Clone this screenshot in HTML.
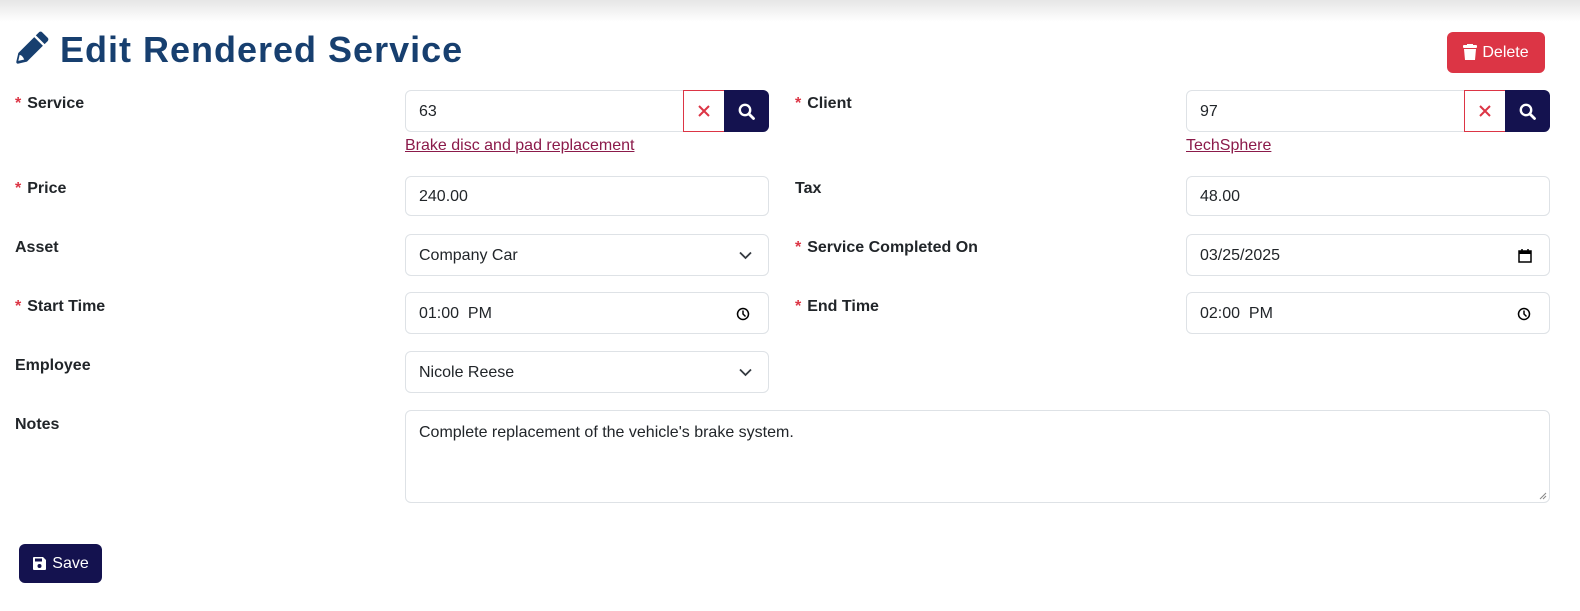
<!DOCTYPE html>
<html><head><style>
body{margin:0;width:1580px;height:611px;background:#fff;font-family:"Liberation Sans",sans-serif;position:relative;overflow:hidden;color:#212529}
.top{position:absolute;left:0;top:0;width:1580px;height:22px;background:linear-gradient(#e6e6e6,#fff)}
.a{position:absolute}
h1{position:absolute;left:60px;top:29px;margin:0;font-size:36px;font-weight:bold;color:#173f6f;letter-spacing:1px}
.lbl{position:absolute;font-weight:bold;font-size:16px;color:#212529}
.lbl i{color:#dc3545;font-style:normal;margin-right:6px}
.in{position:absolute;box-sizing:border-box;border:1px solid #dee2e6;border-radius:6px;background:#fff;font-size:16px;padding-left:13px;padding-top:2px;display:flex;align-items:center;color:#212529}
.lnk{position:absolute;color:#8b1a4a;text-decoration:underline;font-size:16px}
.x{position:absolute;box-sizing:border-box;border:1px solid #dc3545;width:42px;height:42px;display:flex;align-items:center;justify-content:center;background:#fff}
.s{position:absolute;width:45px;height:42px;background:#14124f;border-radius:0 6px 6px 0;display:flex;align-items:center;justify-content:center}
.btn{position:absolute;color:#fff;font-size:16px;border-radius:6px;display:flex;align-items:center;justify-content:center}
</style></head><body>
<div class="top"></div>
<svg class="a" style="left:15px;top:31px" width="34" height="34" viewBox="0 0 512 512"><path fill="#173f6f" d="M410 20l82 82c14 14 14 36 0 50l-46 46-132-132 46-46c14-14 36-14 50 0zM290 92l130 130-240 240-130 30c-20 4-34-10-30-30l30-130zM70 360l-20 90 90-20c-10-10-20-60-70-70z"/></svg>
<h1>Edit Rendered Service</h1>
<div class="btn" style="left:1447px;top:32px;width:98px;height:41px;background:#dc3545"><svg width="14" height="17" viewBox="0 0 14 17" style="margin-right:5px"><rect x="0" y="1" width="14" height="3" rx="1" fill="#fff"/><rect x="4" y="0" width="6" height="2" fill="#fff"/><path d="M1 5h12l-1 11H2z" fill="#fff"/></svg>Delete</div>

<div class="lbl" style="left:15px;top:95px"><i>*</i>Service</div>
<div class="in" style="left:405px;top:90px;width:290px;height:42px;border-radius:6px 0 0 6px">63</div>
<div class="x" style="left:683px;top:90px"><svg width="12" height="12"><path d="M1 1L11 11M11 1L1 11" stroke="#dc3545" stroke-width="2"/></svg></div>
<div class="s" style="left:724px;top:90px"><svg width="17" height="17" viewBox="0 0 17 17"><circle cx="7" cy="7" r="5.2" fill="none" stroke="#fff" stroke-width="2.4"/><path d="M11 11l4.5 4.5" stroke="#fff" stroke-width="2.8" stroke-linecap="round"/></svg></div>
<div class="lnk" style="left:405px;top:137px">Brake disc and pad replacement</div>

<div class="lbl" style="left:795px;top:95px"><i>*</i>Client</div>
<div class="in" style="left:1186px;top:90px;width:290px;height:42px;border-radius:6px 0 0 6px">97</div>
<div class="x" style="left:1464px;top:90px"><svg width="12" height="12"><path d="M1 1L11 11M11 1L1 11" stroke="#dc3545" stroke-width="2"/></svg></div>
<div class="s" style="left:1505px;top:90px"><svg width="17" height="17" viewBox="0 0 17 17"><circle cx="7" cy="7" r="5.2" fill="none" stroke="#fff" stroke-width="2.4"/><path d="M11 11l4.5 4.5" stroke="#fff" stroke-width="2.8" stroke-linecap="round"/></svg></div>
<div class="lnk" style="left:1186px;top:137px">TechSphere</div>

<div class="lbl" style="left:15px;top:180px"><i>*</i>Price</div>
<div class="in" style="left:405px;top:176px;width:364px;height:40px">240.00</div>
<div class="lbl" style="left:795px;top:180px">Tax</div>
<div class="in" style="left:1186px;top:176px;width:364px;height:40px">48.00</div>

<div class="lbl" style="left:15px;top:239px">Asset</div>
<div class="in" style="left:405px;top:234px;width:364px;height:42px">Company Car<svg style="position:absolute;right:16px;top:16px" width="13" height="9"><path d="M1 1.5l5.5 5.5 5.5-5.5" fill="none" stroke="#343a40" stroke-width="1.8"/></svg></div>
<div class="lbl" style="left:795px;top:239px"><i>*</i>Service Completed On</div>
<div class="in" style="left:1186px;top:234px;width:364px;height:42px">03/25/2025<svg style="position:absolute;right:17px;top:13px" width="14" height="15"><rect x="1" y="3" width="12" height="11" fill="none" stroke="#000" stroke-width="1.5"/><rect x="1" y="3" width="12" height="3" fill="#000"/><path d="M4 1v3M10 1v3" stroke="#000" stroke-width="1.5"/></svg></div>

<div class="lbl" style="left:15px;top:298px"><i>*</i>Start Time</div>
<div class="in" style="left:405px;top:292px;width:364px;height:42px">01:00&nbsp; PM<svg style="position:absolute;right:18px;top:14px" width="14" height="14"><circle cx="7" cy="7" r="5.5" fill="none" stroke="#000" stroke-width="1.5"/><path d="M7 3.5V7l2.5 2.5" fill="none" stroke="#000" stroke-width="1.5"/></svg></div>
<div class="lbl" style="left:795px;top:298px"><i>*</i>End Time</div>
<div class="in" style="left:1186px;top:292px;width:364px;height:42px">02:00&nbsp; PM<svg style="position:absolute;right:18px;top:14px" width="14" height="14"><circle cx="7" cy="7" r="5.5" fill="none" stroke="#000" stroke-width="1.5"/><path d="M7 3.5V7l2.5 2.5" fill="none" stroke="#000" stroke-width="1.5"/></svg></div>

<div class="lbl" style="left:15px;top:357px">Employee</div>
<div class="in" style="left:405px;top:351px;width:364px;height:42px">Nicole Reese<svg style="position:absolute;right:16px;top:16px" width="13" height="9"><path d="M1 1.5l5.5 5.5 5.5-5.5" fill="none" stroke="#343a40" stroke-width="1.8"/></svg></div>

<div class="lbl" style="left:15px;top:416px">Notes</div>
<div class="in" style="left:405px;top:410px;width:1145px;height:93px;align-items:flex-start;padding-top:13px">Complete replacement of the vehicle's brake system.<svg style="position:absolute;right:2px;bottom:2px" width="8" height="8"><path d="M7 1L1 7M7 4L4 7" stroke="#888"/></svg></div>

<div class="btn" style="left:19px;top:544px;width:83px;height:39px;background:#14124f"><svg width="15" height="15" viewBox="0 0 15 15" style="margin-right:5px"><path d="M1 2a1 1 0 011-1h9l3 3v9a1 1 0 01-1 1H2a1 1 0 01-1-1z" fill="#fff"/><rect x="3" y="2.5" width="7" height="3" fill="#14124f"/><circle cx="7.5" cy="10" r="2" fill="#14124f"/></svg>Save</div>
</body></html>
